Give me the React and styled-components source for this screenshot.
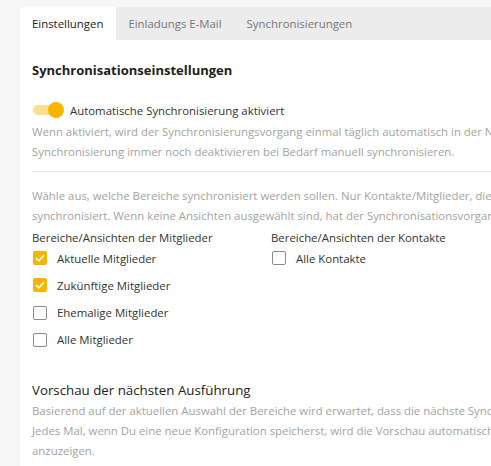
import React, { useState } from 'react'
import styled, { createGlobalStyle } from 'styled-components'

const GlobalStyle = createGlobalStyle`
  html, body {
    margin: 0;
    padding: 0;
    background: #f6f6f6;
    overflow: hidden;
  }
  body {
    font-family: "Open Sans", "Noto Sans", sans-serif;
    color: #333;
  }
`

const tabs = ['Einstellungen', 'Einladungs E-Mail', 'Synchronisierungen']

const memberViews = [
    { label: 'Aktuelle Mitglieder', checked: true },
    { label: 'Zukünftige Mitglieder', checked: true },
    { label: 'Ehemalige Mitglieder', checked: false },
    { label: 'Alle Mitglieder', checked: false },
]

const contactViews = [
    { label: 'Alle Kontakte', checked: false },
]

const CheckItem = ({ label, checked }) => (
    <CheckRow>
        <Box checked={checked}>
            {checked ? (
                <svg width="10" height="8" viewBox="0 0 10 8">
                    <path d="M1 4.2 L3.8 6.8 L9 1.2" fill="none" stroke="#fff" strokeWidth="1.6" />
                </svg>
            ) : null}
        </Box>
        <CheckLabel>{label}</CheckLabel>
    </CheckRow>
)

const App = () => {
    const [active] = useState(0)

    return (
        <Page>
            <GlobalStyle />
            <Card>
                <TabBar>
                    {tabs.map((t, i) => (
                        <Tab key={t} active={i === active}>{t}</Tab>
                    ))}
                </TabBar>
                <Content>
                    <Heading>Synchronisationseinstellungen</Heading>
                    <ToggleRow>
                        <Toggle><Knob /></Toggle>
                        <ToggleLabel>Automatische Synchronisierung aktiviert</ToggleLabel>
                    </ToggleRow>
                    <Hint top={2}>
                        Wenn aktiviert, wird der Synchronisierungsvorgang einmal täglich automatisch in der Nacht durchgeführt. Du kannst trotz aktivierter<br />
                        Synchronisierung immer noch deaktivieren bei Bedarf manuell synchronisieren.
                    </Hint>
                    <Divider />
                    <Hint top={14}>
                        Wähle aus, welche Bereiche synchronisiert werden sollen. Nur Kontakte/Mitglieder, die Teil der ausgewählten Ansichten sind, werden<br />
                        synchronisiert. Wenn keine Ansichten ausgewählt sind, hat der Synchronisationsvorgang keine Auswirkung.
                    </Hint>
                    <Columns>
                        <Column>
                            <ColumnTitle>Bereiche/Ansichten der Mitglieder</ColumnTitle>
                            {memberViews.map(v => <CheckItem key={v.label} {...v} />)}
                        </Column>
                        <Column>
                            <ColumnTitle>Bereiche/Ansichten der Kontakte</ColumnTitle>
                            {contactViews.map(v => <CheckItem key={v.label} {...v} />)}
                        </Column>
                    </Columns>
                    <SubHeading>Vorschau der nächsten Ausführung</SubHeading>
                    <Hint>
                        Basierend auf der aktuellen Auswahl der Bereiche wird erwartet, dass die nächste Synchronisierung folgende Änderungen durchführt.<br />
                        Jedes Mal, wenn Du eine neue Konfiguration speicherst, wird die Vorschau automatisch aktualisiert, um die erwarteten Änderungen<br />
                        anzuzeigen.
                    </Hint>
                </Content>
            </Card>
        </Page>
    )
}

const Page = styled.div`
    width: 491px;
    height: 466px;
    padding: 7px 0 0 20px;
    box-sizing: border-box;
    overflow: hidden;
`
const Card = styled.div`
    width: 560px;
    background: #fff;
    border-radius: 4px 0 0 0;
    min-height: 480px;
`
const TabBar = styled.div`
    display: flex;
    height: 33px;
    background: #ececec;
    border-radius: 4px 0 0 0;
`
const Tab = styled.div`
    display: flex;
    align-items: center;
    padding: 0 13px 0 12px;
    font-size: 11.4px;
    color: ${p => (p.active ? '#222' : '#777')};
    background: ${p => (p.active ? '#fff' : 'transparent')};
    border-radius: ${p => (p.active ? '4px 0 0 0' : '0')};
    white-space: nowrap;
`
const Content = styled.div`
    padding: 20px 0 0 12px;
    display: flex;
    flex-direction: column;
`
const Heading = styled.div`
    font-size: 13px;
    font-weight: 700;
    line-height: 20px;
    color: #222;
    white-space: nowrap;
`
const ToggleRow = styled.div`
    display: flex;
    align-items: center;
    gap: 7px;
    height: 20px;
    margin-top: 20px;
`
const Toggle = styled.div`
    position: relative;
    width: 30px;
    height: 10px;
    margin-left: 1px;
    border-radius: 5px;
    background: #fcdf8c;
`
const Knob = styled.div`
    position: absolute;
    right: -1px;
    top: -3px;
    width: 16px;
    height: 16px;
    border-radius: 50%;
    background: #f8b400;
`
const ToggleLabel = styled.span`
    font-size: 11.4px;
    color: #333;
    white-space: nowrap;
`
const Hint = styled.div`
    margin-top: ${p => p.top || 0}px;
    font-size: 11.4px;
    line-height: 20px;
    color: #a3a3a3;
    white-space: nowrap;
`
const Divider = styled.div`
    height: 1px;
    background: #e9e9e9;
    margin-top: 9px;
`
const Columns = styled.div`
    display: grid;
    grid-template-columns: 239px 1fr;
    margin-top: 2px;
`
const Column = styled.div`
    display: flex;
    flex-direction: column;
    gap: 7.3px;
`
const ColumnTitle = styled.div`
    font-size: 11.4px;
    line-height: 20px;
    color: #333;
    margin-bottom: -7.3px;
    white-space: nowrap;
`
const CheckRow = styled.div`
    display: flex;
    align-items: center;
    gap: 10px;
    height: 20px;
`
const Box = styled.div`
    width: 14px;
    height: 14px;
    box-sizing: border-box;
    margin-left: 1px;
    border-radius: 2px;
    display: flex;
    align-items: center;
    justify-content: center;
    background: ${p => (p.checked ? '#f8b400' : '#fff')};
    border: ${p => (p.checked ? 'none' : '1.5px solid #8c8c8c')};
`
const CheckLabel = styled.span`
    font-size: 11.4px;
    color: #333;
    white-space: nowrap;
`
const SubHeading = styled.div`
    margin-top: 29px;
    font-size: 13.3px;
    line-height: 22px;
    color: #222;
    white-space: nowrap;
`

export default App
